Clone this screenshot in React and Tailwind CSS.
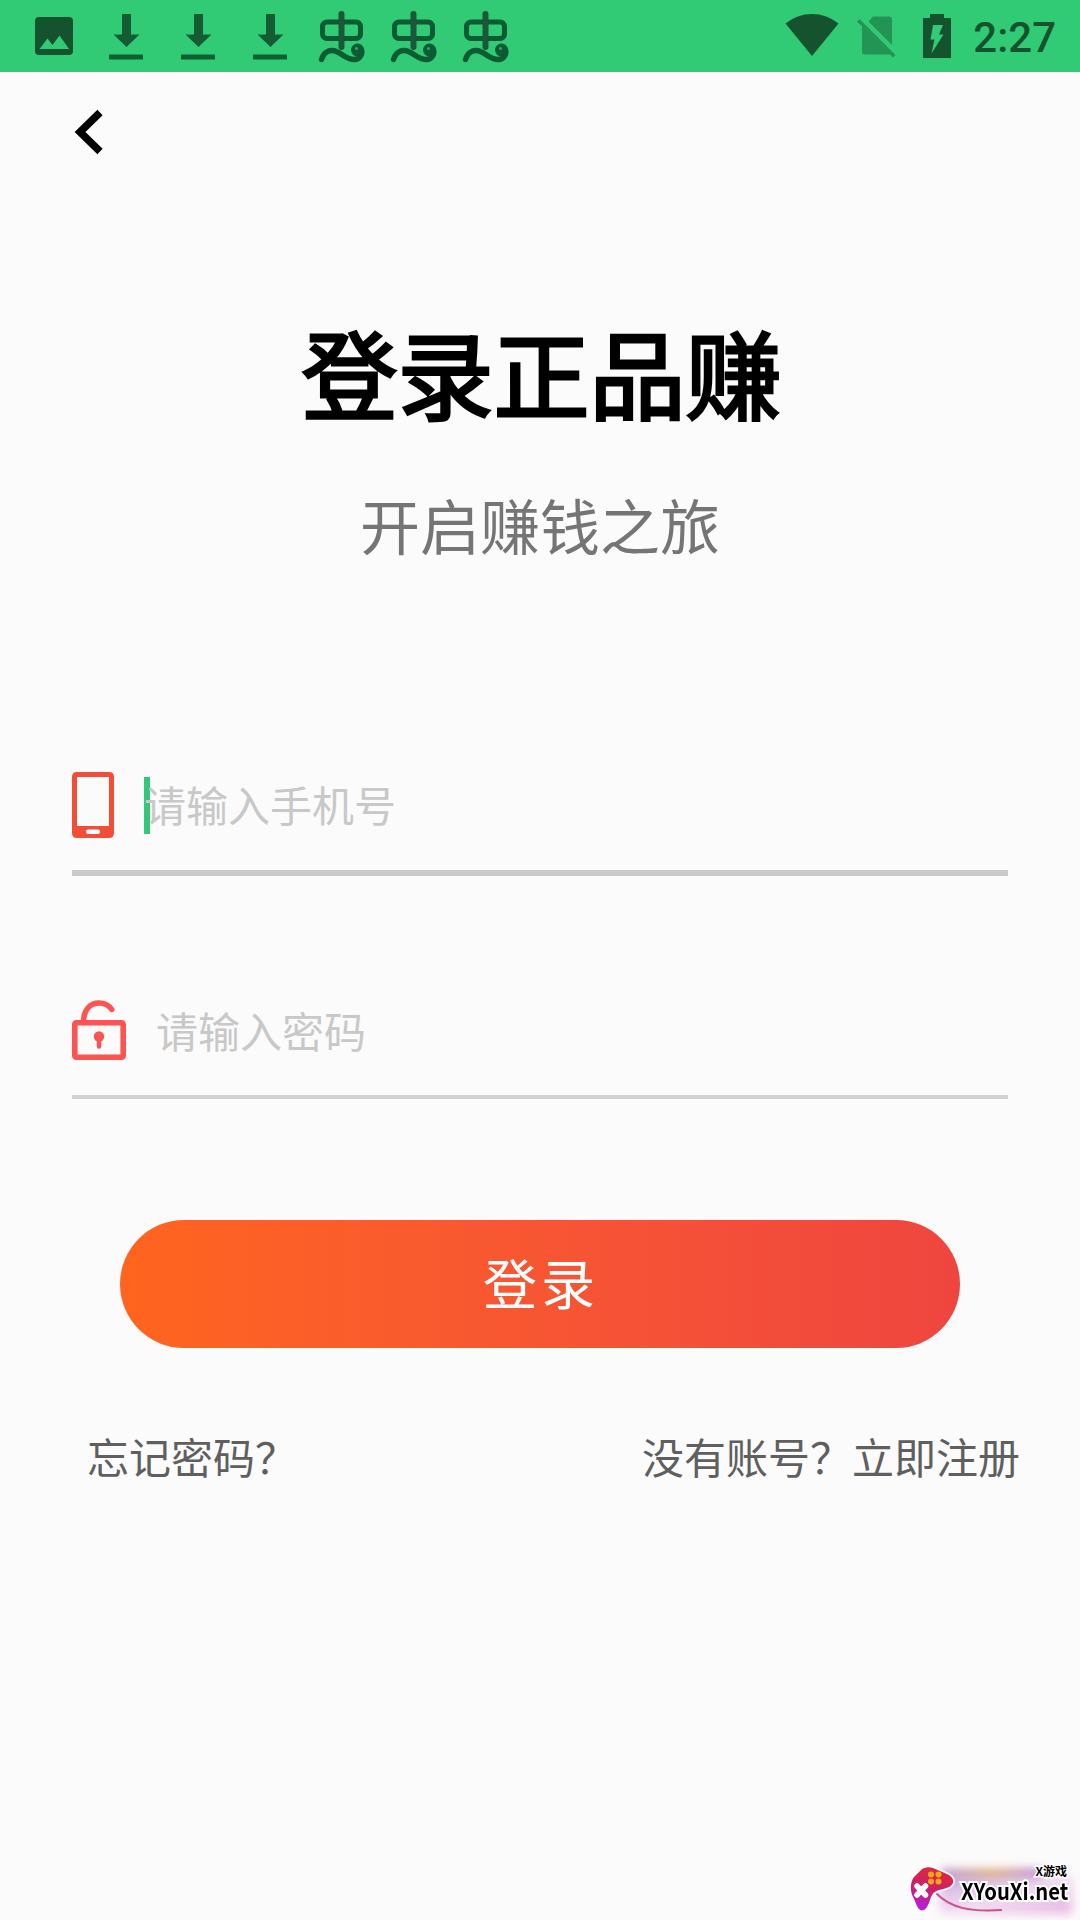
import { useState } from "react";

const ImageIcon = () => (
  <svg width="38" height="38" viewBox="0 0 38 38">
    <rect width="38" height="38" rx="4" fill="#15532f" />
    <path d="M4.5 32 L12.5 21.5 L17.5 28 L24.5 18.5 L34 32 Z" fill="#32cb75" />
  </svg>
);

const DownloadIcon = () => (
  <svg width="34" height="46" viewBox="0 0 34 46">
    <path d="M13 0 H22 V20.5 H30.5 L17.5 33 L4.5 20.5 H13 Z" fill="#155c33" />
    <rect y="40.5" width="34" height="5" fill="#0b6131" />
  </svg>
);

const BugIcon = () => (
  <svg width="48" height="54" viewBox="0 0 48 54" fill="none" stroke="#0c5b33" strokeLinecap="round">
    <rect x="4.5" y="12" width="38" height="16.5" rx="4.5" strokeWidth="5" />
    <path d="M23.5 4 V37" stroke="#1b573a" strokeWidth="6" />
    <path d="M3.5 49.5 C5.5 43 10 40 15 40.5 C24 42 27 50 37 49.5 C43 48.5 46 42 42 38" strokeWidth="5.4" />
    <circle cx="39.5" cy="40" r="6.5" fill="#0c5b33" stroke="none" />
    <circle cx="38.5" cy="38.5" r="1.5" fill="#32a868" stroke="none" />
  </svg>
);

const WifiIcon = () => (
  <svg width="54" height="42" viewBox="0 0 54 42">
    <path d="M0.5 9.5 Q12 0 27 0 Q42 0 53.5 9.5 L27 42 Z" fill="#15532f" />
  </svg>
);

const NoSimIcon = () => (
  <svg width="40" height="44" viewBox="0 0 40 44">
    <g fill="none" opacity="0.45">
      <path
        d="M11.5 5.5 L16 0.5 H32 Q35 0.5 35 3.5 V29 Z M0 5.500 L2.500 3 L38.500 39 L36 41.500 L33 38.500 H8 Q5 38.500 5 35.500 V10.500 Z"
        fill="#15532f"
      />
    </g>
  </svg>
);

const BatteryIcon = () => (
  <svg width="28" height="44" viewBox="0 0 28 44">
    <path d="M7 0 H21 V4 H28 V44 H0 V4 H7 Z" fill="#15532f" />
    <path d="M10 11 H20 L16 20.5 H20.5 L8.5 39.5 L11.5 25.5 H7.5 Z" fill="#32cb75" />
  </svg>
);

const PhoneIcon = () => (
  <svg width="42" height="66" viewBox="0 0 42 66">
    <path
      fillRule="evenodd"
      fill="#f04f36"
      d="M5 0 H37 Q42 0 42 5 V61 Q42 66 37 66 H5 Q0 66 0 61 V5 Q0 0 5 0 Z M5 5 V54 H37 V5 Z"
    />
    <rect x="14" y="57.5" width="14" height="4.5" rx="2.2" fill="#fff" />
  </svg>
);

const LockIcon = () => (
  <svg width="54" height="60" viewBox="0 0 54 60" fill="none" stroke="#fc5450">
    <rect x="2.8" y="22.8" width="48.4" height="34.4" rx="1.5" strokeWidth="5.6" />
    <path d="M11.5 22 C11.5 10 18 3 27 3 C33 3 37 5.5 39.8 9.5" strokeWidth="5.4" strokeLinecap="round" />
    <circle cx="27" cy="36.5" r="5.2" fill="#fc5450" stroke="none" />
    <path d="M27 38 V46.5" strokeWidth="4.4" strokeLinecap="round" />
  </svg>
);

const GamepadIcon = () => (
  <svg width="54" height="50" viewBox="0 0 54 50">
    <defs>
      <linearGradient id="pad" x1="0.6" y1="0" x2="0.3" y2="1">
        <stop offset="0" stopColor="#dc2a3c" />
        <stop offset="0.5" stopColor="#cb1f68" />
        <stop offset="1" stopColor="#b41fe0" />
      </linearGradient>
    </defs>
    <path
      d="M17 6 C20 3 25 2.5 29 4 L43 10 C50 13 51 19 46 22.5 C40 26 31 25 28 31 C25 37 24 46 18 46.5 C13 46 12 38 9 33 C6 27 6 18 10 13 Z"
      fill="url(#pad)"
      stroke="#fff"
      strokeWidth="3.5"
      style={{ paintOrder: "stroke" }}
    />
    <path d="M13 22 L21.5 31 M21.5 22 L13 31" stroke="#fff" strokeWidth="5.5" strokeLinecap="round" />
    <g fill="#fba31c">
      <circle cx="27" cy="10.5" r="3" />
      <circle cx="34.5" cy="10.5" r="3" />
      <circle cx="27" cy="17.5" r="3" />
      <circle cx="34.5" cy="17.5" r="3" />
    </g>
  </svg>
);

const StatusBar = () => (
  <div className="flex h-[72px] items-start justify-between bg-[#32cb75] pl-[35px] pr-[24px]">
    <div className="flex items-start">
      <div className="mt-[17px] mr-[36px]"><ImageIcon /></div>
      <div className="mt-[14px] mr-[31px] flex gap-[38px]">
        {[0, 1, 2].map((i) => <DownloadIcon key={i} />)}
      </div>
      <div className="mt-[10px] flex gap-6">
        {[0, 1, 2].map((i) => <BugIcon key={i} />)}
      </div>
    </div>
    <div className="flex items-start">
      <div className="mt-[14px] mr-[18px]"><WifiIcon /></div>
      <div className="mt-[16px] mr-[26px]"><NoSimIcon /></div>
      <div className="mt-[14px] mr-[22px]"><BatteryIcon /></div>
      <span className="mt-[2px] font-[Roboto,sans-serif] text-[42px] leading-[72px] font-medium text-[#15532f]">2:27</span>
    </div>
  </div>
);

const Watermark = () => (
  <div className="absolute right-0 bottom-0 flex h-[56px] w-[176px] items-start">
    <div className="absolute top-1 left-[38px] h-[16px] w-[100px] bg-linear-to-r from-[#b98fd0] via-[#e0a860] to-[#b070d8] opacity-80 blur-[4px]" />
    <div className="absolute top-[12px] left-[36px] h-[38px] w-[132px] bg-linear-to-br from-[#c09ad8] via-[#efd5ee] to-[#e3a0dc] opacity-80 blur-[5px]" />
    <svg className="absolute top-[28px] left-[32px]" width="90" height="24" viewBox="0 0 90 24" fill="none">
      <path d="M0 1 C14 16 34 20 66 18" stroke="#d0508c" strokeWidth="2" />
    </svg>
    <div className="relative shrink-0"><GamepadIcon /></div>
    <div className="relative w-[112px] shrink-0">
      <div className="pr-[3px] text-right text-[12px] leading-[14px] font-bold text-black [paint-order:stroke] [-webkit-text-stroke:3px_white]">X游戏</div>
      <div className="mt-px ml-[3px] w-[130px] origin-left scale-x-[0.88] text-[23px] leading-[22px] font-bold text-black [paint-order:stroke] [-webkit-text-stroke:4px_white]">XYouXi.net</div>
    </div>
  </div>
);

const App = () => {
  const [phone, setPhone] = useState("");
  const [password, setPassword] = useState("");

  return (
    <div className="relative flex h-[1920px] w-[1080px] flex-col overflow-hidden bg-[#fbfbfb] font-['Noto_Sans_CJK_SC',sans-serif]">
      <StatusBar />

      <button className="mt-[36px] ml-[74px] w-8">
        <svg width="32" height="48" viewBox="0 0 32 48">
          <path d="M26 4.5 L6 24 L26 43.5" fill="none" stroke="#000" strokeWidth="7.5" />
        </svg>
      </button>

      <h1 className="mt-[145px] pl-[3px] text-center text-[96px] leading-[140px] font-normal text-black [-webkit-text-stroke:3px_black]">登录正品赚</h1>
      <p className="mt-[38px] text-center text-[60px] leading-[90px] text-[#757575]">开启赚钱之旅</p>

      <div className="mx-[72px] mt-[203px] flex h-[104px] items-start gap-[30px] border-b-[6px] border-[#c9c9c9]">
        <PhoneIcon />
        <div className="relative flex-1">
          <div className="absolute top-[5px] left-0 h-[57px] w-[6px] bg-[#32c878]" />
          <input
            type="text"
            placeholder="请输入手机号"
            value={phone}
            onChange={(e) => setPhone(e.target.value)}
            className="relative h-[64px] w-full bg-transparent text-[42px] leading-[64px] outline-none placeholder:text-[#c8c8c8]"
          />
        </div>
      </div>

      <div className="mx-[72px] mt-[124px] flex h-[99px] items-start gap-[30px] border-b-[4px] border-[#d2d2d2]">
        <LockIcon />
        <input
          type="text"
          placeholder="请输入密码"
          value={password}
          onChange={(e) => setPassword(e.target.value)}
          className="-mt-[2px] h-[64px] flex-1 bg-transparent text-[42px] leading-[64px] outline-none placeholder:text-[#c8c8c8]"
        />
      </div>

      <button className="mx-[120px] mt-[121px] h-[128px] rounded-full bg-linear-to-r from-[#ff651e] to-[#ef453f] pb-[5px] pl-[2px] text-[54px] leading-[80px] tracking-[4px] text-white">
        登录
      </button>

      <div className="mt-[76px] flex justify-between pr-[60px] pl-[87px] text-[42px] leading-[64px] text-[#5f5f5f]">
        <span>忘记密码？</span>
        <span>没有账号？立即注册</span>
      </div>

      <Watermark />
    </div>
  );
};

export default App;
